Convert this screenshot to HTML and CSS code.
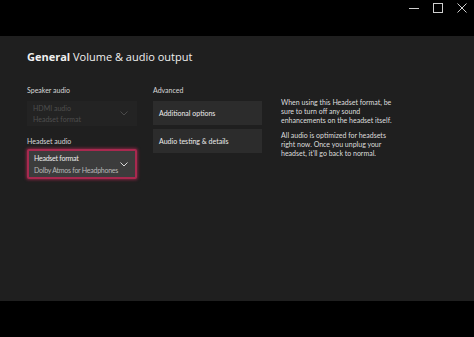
FILE: index.html
```html
<!DOCTYPE html>
<html>
<head>
<meta charset="utf-8">
<link rel="stylesheet" href="styles.css">
</head>
<body>
<div class="titlebar">
  <div class="controls">
    <svg class="ctl" width="10" height="10" viewBox="0 0 10 10"><path d="M0 5.5h10" stroke="#cfcfcf" stroke-width="1" fill="none"/></svg>
    <svg class="ctl" width="10" height="10" viewBox="0 0 10 10"><rect x="0.5" y="0.5" width="9" height="9" stroke="#cfcfcf" stroke-width="1" fill="none"/></svg>
    <svg class="ctl" width="10" height="10" viewBox="0 0 10 10"><path d="M0.5 0.5L9.5 9.5M9.5 0.5L0.5 9.5" stroke="#cfcfcf" stroke-width="1" fill="none"/></svg>
  </div>
</div>
<div class="panel">
  <h1 class="title"><span class="bold">General</span> Volume &amp; audio output</h1>
  <div class="cols">
    <div class="col-left">
      <div class="label">Speaker audio</div>
      <div class="select disabled">
        <div class="sel-text">
          <div>HDMI audio</div>
          <div>Headset format</div>
        </div>
        <svg class="chev" width="8" height="5" viewBox="0 0 8 5"><path d="M0.5 0.5L4 4L7.5 0.5" stroke="#4a4a4a" stroke-width="1" fill="none"/></svg>
      </div>
      <div class="label label2">Headset audio</div>
      <div class="select focused">
        <div class="sel-text">
          <div class="sel-main">Headset format</div>
          <div class="sel-sub">Dolby Atmos for Headphones</div>
        </div>
        <svg class="chev" width="8" height="5" viewBox="0 0 8 5"><path d="M0.5 0.5L4 4L7.5 0.5" stroke="#d8d8d8" stroke-width="1" fill="none"/></svg>
      </div>
    </div>
    <div class="col-mid">
      <div class="label">Advanced</div>
      <div class="btn">Additional options</div>
      <div class="btn">Audio testing &amp; details</div>
    </div>
    <div class="col-right">
      <p>When using this Headset format, be sure to turn off any sound enhancements on the headset itself.</p>
      <p>All audio is optimized for headsets right now. Once you unplug your headset, it'll go back to normal.</p>
    </div>
  </div>
</div>
<div class="bottom"></div>
</body>
</html>
```
FILE: styles.css
```css
html, body {
  margin: 0;
  padding: 0;
  background: #000;
  width: 474px;
  height: 337px;
  overflow: hidden;
  font-family: "Lato", "Open Sans", sans-serif;
  color: #e8e8e8;
}
.titlebar {
  height: 36px;
  background: #000;
  display: flex;
  justify-content: flex-end;
}
.controls {
  display: flex;
  gap: 14px;
  padding: 3px 7px 0 0;
  height: 10px;
}
.ctl {
  display: block;
}
.panel {
  height: 265px;
  background: #1f1f1f;
  box-sizing: border-box;
  padding: 13px 27px 0 27px;
}
.title {
  margin: 0;
  font-family: "Open Sans", sans-serif;
  font-size: 11px;
  line-height: 16px;
  font-weight: 400;
  color: #f0f0f0;
}
.title .bold {
  font-weight: 700;
}
.cols {
  display: flex;
  margin-top: 20px;
}
.col-left {
  width: 110px;
  display: flex;
  flex-direction: column;
}
.col-mid {
  width: 109px;
  margin-left: 16px;
  display: flex;
  flex-direction: column;
}
.col-right {
  margin-left: 19px;
  width: 118px;
  padding-top: 13px;
}
.label {
  font-size: 7px;
  line-height: 10px;
  color: #d8d8d8;
  height: 10px;
}
.label2 {
  margin-top: 10px;
}
.select {
  display: flex;
  align-items: center;
  justify-content: space-between;
  box-sizing: border-box;
  font-size: 7px;
  line-height: 12px;
  white-space: nowrap;
}
.select.disabled {
  margin-top: 6px;
  height: 25px;
  background: #232323;
  color: #4e4e4e;
  padding: 0 9px 0 6px;
}
.select.disabled .sel-text div {
  line-height: 11px;
}
.select.focused {
  margin-top: 3px;
  height: 30px;
  background: #3c3c3c;
  border: 2px solid #a8294f;
  border-radius: 2px;
  box-shadow: 0 0 3px 1px rgba(200, 40, 90, 0.55);
  padding: 0 7px 0 5px;
  letter-spacing: -0.25px;
}
.sel-main {
  color: #ececec;
}
.sel-sub {
  color: #b8b8b8;
}
.chev {
  display: block;
  flex-shrink: 0;
}
.btn {
  margin-top: 6px;
  height: 24px;
  background: #2c2c2c;
  font-size: 7px;
  color: #ececec;
  display: flex;
  align-items: center;
  padding-left: 6px;
}
.btn + .btn {
  margin-top: 4px;
}
.col-right p {
  margin: 0 0 6px 0;
  font-size: 7px;
  line-height: 9px;
  color: #dedede;
}
.bottom {
  height: 36px;
  background: #000;
}
```
